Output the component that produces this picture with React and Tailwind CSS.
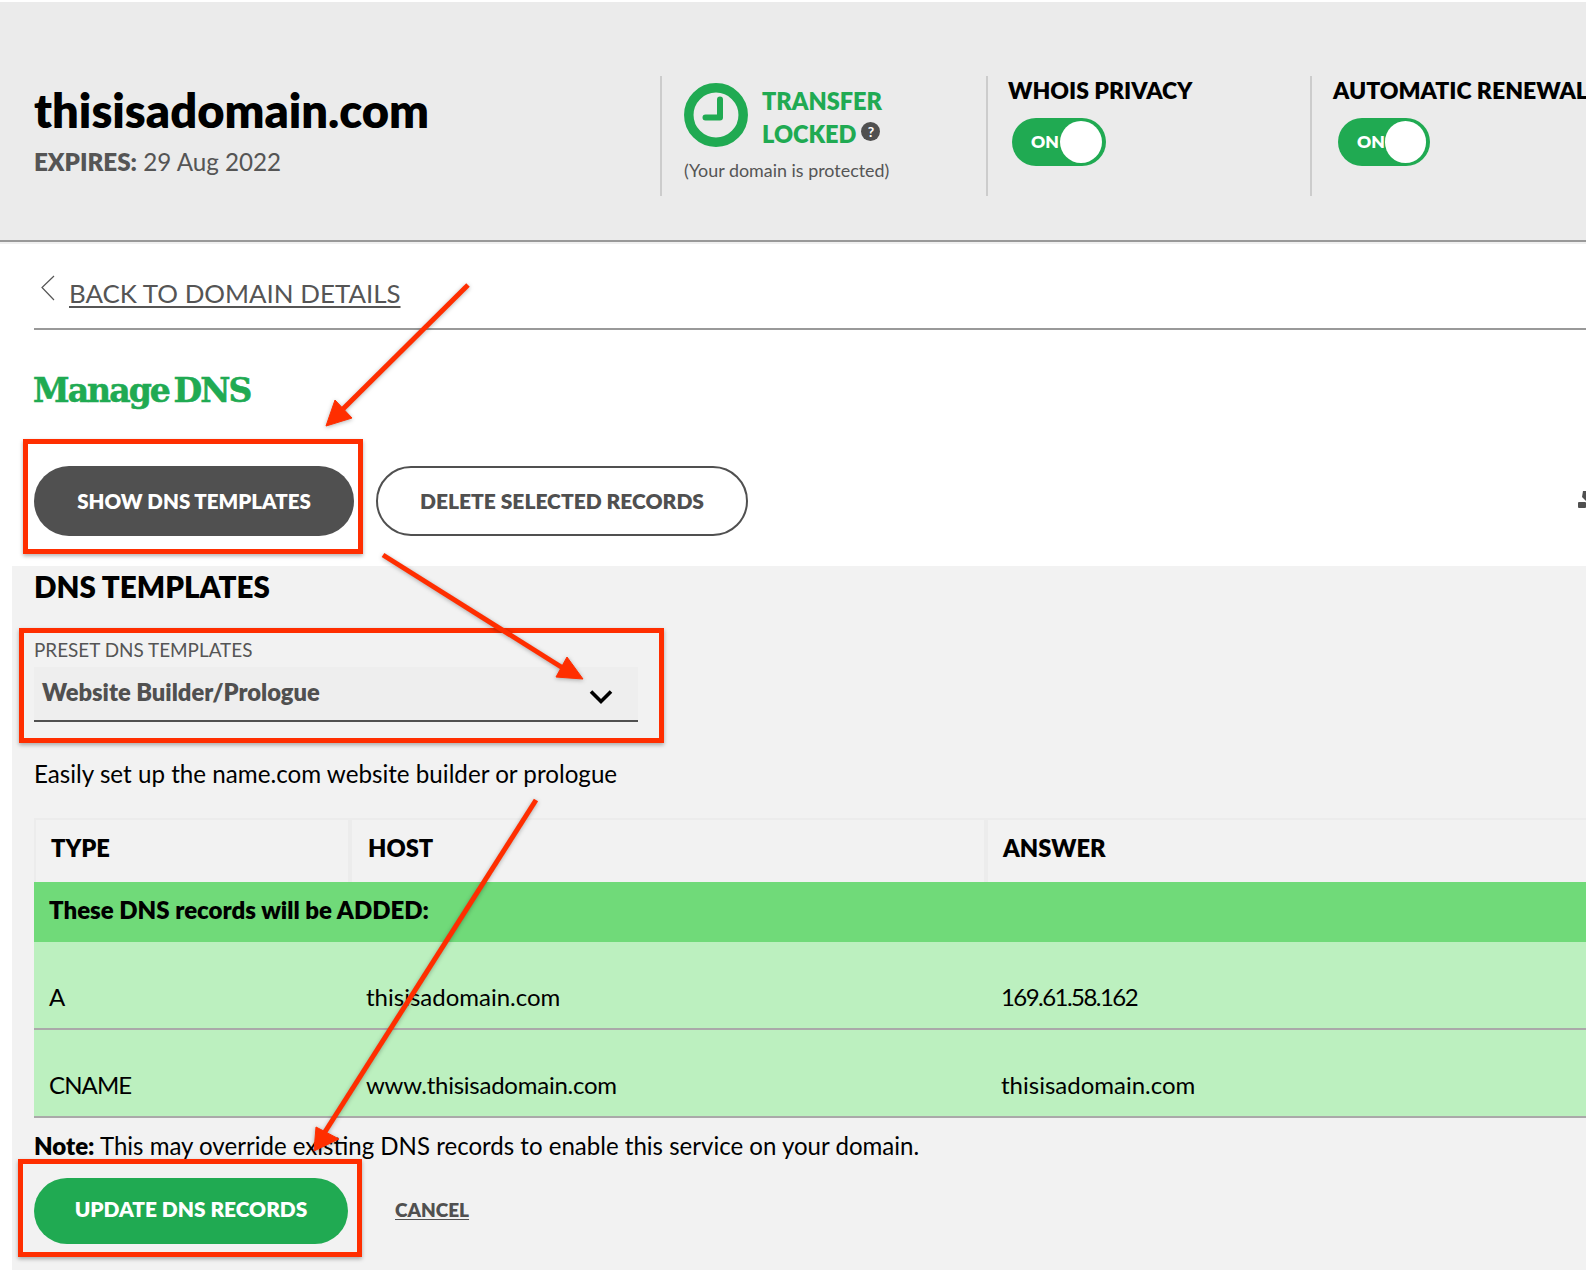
const FONT = "font-['Lato','Liberation_Sans',sans-serif]";

function Toggle({ className = "" }) {
  return (
    <div className={`flex h-[48px] items-center justify-between rounded-full bg-[#20aa52] pl-[19px] pr-[4px] ${className}`}>
      <span className="text-[17.5px] font-extrabold leading-none text-white">ON</span>
      <span className="h-[42px] w-[42px] rounded-full bg-white" />
    </div>
  );
}

function RedBox({ className }) {
  return <div className={`absolute border-[5px] border-[#ff2e00] shadow-[0_2px_4px_rgba(0,0,0,0.3)] ${className}`} />;
}

function Cell({ children, className = "" }) {
  return <div className={`text-[24px] leading-[28px] text-black ${className}`}>{children}</div>;
}

function Row({ type, host, answer, typeClass = "", hostClass = "", answerClass = "" }) {
  return (
    <div className="grid h-[88px] grid-cols-[315px_635px_1fr] border-b-[2px] border-[#aaa9a9] bg-[#bcf0bf] pt-[41px]">
      <Cell className={`pl-[15px] ${typeClass}`}>{type}</Cell>
      <Cell className={`pl-[17px] ${hostClass}`}>{host}</Cell>
      <Cell className={`pl-[17px] ${answerClass}`}>{answer}</Cell>
    </div>
  );
}

export default function App() {
  return (
    <div className={`relative h-[1270px] w-[1586px] overflow-hidden bg-white ${FONT}`}>
      {/* Header */}
      <div className="pt-[2px]">
        <div className="flex h-[240px] border-b-[2px] border-[#999] bg-[#ebebeb] pt-[74px]">
          <div className="w-[660px] shrink-0 pl-[34px]">
            <div className="pt-[4px] text-[47px] font-extrabold leading-[60px] text-black">thisisadomain.com</div>
            <div className="mt-[7px] text-[24.2px] leading-[30px] text-[#555]">
              <b className="font-extrabold">EXPIRES:</b> 29 Aug 2022
            </div>
          </div>
          <div className="h-[120px] w-[326px] shrink-0 border-l-[2px] border-[#ccc] pl-[22px]">
            <div className="flex">
              <svg width="64" height="64" viewBox="0 0 64 64" className="mt-[7px]">
                <circle cx="32" cy="32" r="27.2" fill="none" stroke="#20aa52" strokeWidth="9.5" />
                <path d="M36 16.5 V34.5 H21.5" fill="none" stroke="#20aa52" strokeWidth="6" strokeLinejoin="round" strokeLinecap="round" />
              </svg>
              <div className="ml-[14px] pt-[8.5px] text-[23.5px] font-extrabold leading-[33px] text-[#20aa52]">
                <div>TRANSFER</div>
                <div className="flex items-center">
                  LOCKED
                  <span className="mb-[5px] ml-[5px] flex h-[19px] w-[19px] items-center justify-center rounded-full bg-[#505050] text-[14px] font-bold leading-none text-white">?</span>
                </div>
              </div>
            </div>
            <div className="mt-[8.5px] text-[17.9px] leading-[22px] text-[#555]">(Your domain is protected)</div>
          </div>
          <div className="h-[120px] w-[324px] shrink-0 border-l-[2px] border-[#ccc] pl-[20px]">
            <div className="text-[23px] font-extrabold leading-[28px] text-black">WHOIS PRIVACY</div>
            <Toggle className="ml-[4px] mt-[14px] w-[94px]" />
          </div>
          <div className="h-[120px] min-w-0 flex-1 border-l-[2px] border-[#ccc] pl-[21px]">
            <div className="whitespace-nowrap text-[23px] font-extrabold leading-[28px] text-black">AUTOMATIC RENEWAL</div>
            <Toggle className="ml-[5px] mt-[14px] w-[92px]" />
          </div>
        </div>
        <div className="h-[2px] bg-[#f0f0f0]" />
      </div>

      {/* Back link */}
      <div className="ml-[34px] flex h-[86px] items-start border-b-[2px] border-[#999] pt-[31px]">
        <svg width="16" height="28" viewBox="0 0 16 28" className="-mt-[1px] ml-[6px]">
          <path d="M14 2 L2 13.5 L14 26" fill="none" stroke="#555" strokeWidth="1.2" />
        </svg>
        <a className="ml-[13px] text-[25.9px] leading-[36px] text-[#555] underline underline-offset-[3px]">BACK TO DOMAIN DETAILS</a>
      </div>

      {/* Manage DNS */}
      <div className="ml-[33px] mt-[38px] font-['DejaVu_Serif',serif] text-[33px] font-bold leading-[46px] tracking-[-1.9px] text-[#20aa52] [-webkit-text-stroke:0.6px_#20aa52] [word-spacing:-5px]">Manage DNS</div>

      {/* Buttons */}
      <div className="relative ml-[34px] mt-[52px] flex gap-[22px]">
        <button className="h-[70px] w-[320px] rounded-full bg-[#505050] text-[20.5px] font-extrabold text-white">SHOW DNS TEMPLATES</button>
        <button className="h-[70px] w-[372px] rounded-full border-[2px] border-[#505050] bg-white text-[21px] font-extrabold text-[#505050]">DELETE SELECTED RECORDS</button>
        <svg width="8" height="18" viewBox="0 0 8 18" className="absolute left-[1544px] top-[24px]">
          <path d="M5 1 H8 V11 L4 7 Z" fill="#505050" />
          <rect x="0" y="12" width="8" height="6" rx="1" fill="#505050" />
        </svg>
      </div>

      {/* Templates panel */}
      <div className="ml-[12px] mt-[30px] h-[704px] bg-[#f2f2f2] pl-[22px]">
        <div className="pt-[5px] text-[29.6px] font-extrabold leading-[32px] text-black">DNS TEMPLATES</div>
        <div className="mt-[35px] text-[18.9px] leading-[24px] text-[#555]">PRESET DNS TEMPLATES</div>
        <div className="mt-[5px] flex h-[55px] w-[604px] items-start justify-between border-b-[2px] border-[#505050] bg-[#eeeeee] pl-[8px] pr-[25px] pt-[10px]">
          <span className="text-[23.7px] font-extrabold leading-[30px] text-[#505050]">Website Builder/Prologue</span>
          <svg width="24" height="16" viewBox="0 0 24 16" className="mt-[12px]">
            <path d="M2 2.5 L12 12.5 L22 2.5" fill="none" stroke="#000" strokeWidth="3.6" />
          </svg>
        </div>
        <div className="mt-[37px] text-[24.2px] leading-[30px] text-black">Easily set up the name.com website builder or prologue</div>

        {/* Table */}
        <div className="mt-[29px]">
          <div className="grid h-[64px] grid-cols-[318px_636px_1fr] border-t-[2px] border-[#ececec] text-[23.7px] font-extrabold leading-[56px] text-black">
            <div className="border-l-[2px] border-r-[4px] border-[#ececec] pl-[15px]">TYPE</div>
            <div className="border-r-[4px] border-[#ececec] pl-[16px]">HOST</div>
            <div className="pl-[15px]">ANSWER</div>
          </div>
          <div className="flex h-[60px] items-center bg-[#70da79] pb-[4px] pl-[15px] text-[24.05px] font-extrabold text-black">These DNS records will be ADDED:</div>
          <Row type="A" host="thisisadomain.com" answer="169.61.58.162" answerClass="tracking-[-1.55px]" />
          <Row type="CNAME" host="www.thisisadomain.com" answer="thisisadomain.com" typeClass="tracking-[-0.9px]" hostClass="tracking-[-0.25px]" />
        </div>

        <div className="mt-[13px] text-[24.05px] leading-[30px] text-black">
          <b className="font-extrabold">Note:</b> This may override existing DNS records to enable this service on your domain.
        </div>
        <div className="mt-[17px] flex items-center">
          <button className="h-[66px] w-[314px] rounded-full bg-[#20aa52] pb-[4px] text-[20.9px] font-extrabold text-white">UPDATE DNS RECORDS</button>
          <a className="mb-[2px] ml-[47px] text-[19px] font-extrabold text-[#505050] underline underline-offset-[2px]">CANCEL</a>
        </div>
      </div>

      {/* Annotations */}
      <RedBox className="left-[23px] top-[439px] h-[115px] w-[340px]" />
      <RedBox className="left-[19px] top-[628px] h-[115px] w-[645px]" />
      <RedBox className="left-[18px] top-[1159px] h-[98px] w-[344px]" />
      <svg className="absolute left-0 top-0 drop-shadow-[0_1px_2px_rgba(0,0,0,0.3)]" width="1586" height="1270" viewBox="0 0 1586 1270">
        <g fill="#ff2e00" stroke="#ff2e00" strokeWidth="5">
          <path d="M468 285 L343 409" fill="none" />
          <path d="M326 426 L335 400 L352 418 Z" strokeWidth="1" />
          <path d="M383 555 L566 670" fill="none" />
          <path d="M583 679 L567 657 L556 677 Z" strokeWidth="1" />
          <path d="M536 800 L323 1135" fill="none" />
          <path d="M314 1151 L316 1127 L339 1139 Z" strokeWidth="1" />
        </g>
      </svg>
    </div>
  );
}
